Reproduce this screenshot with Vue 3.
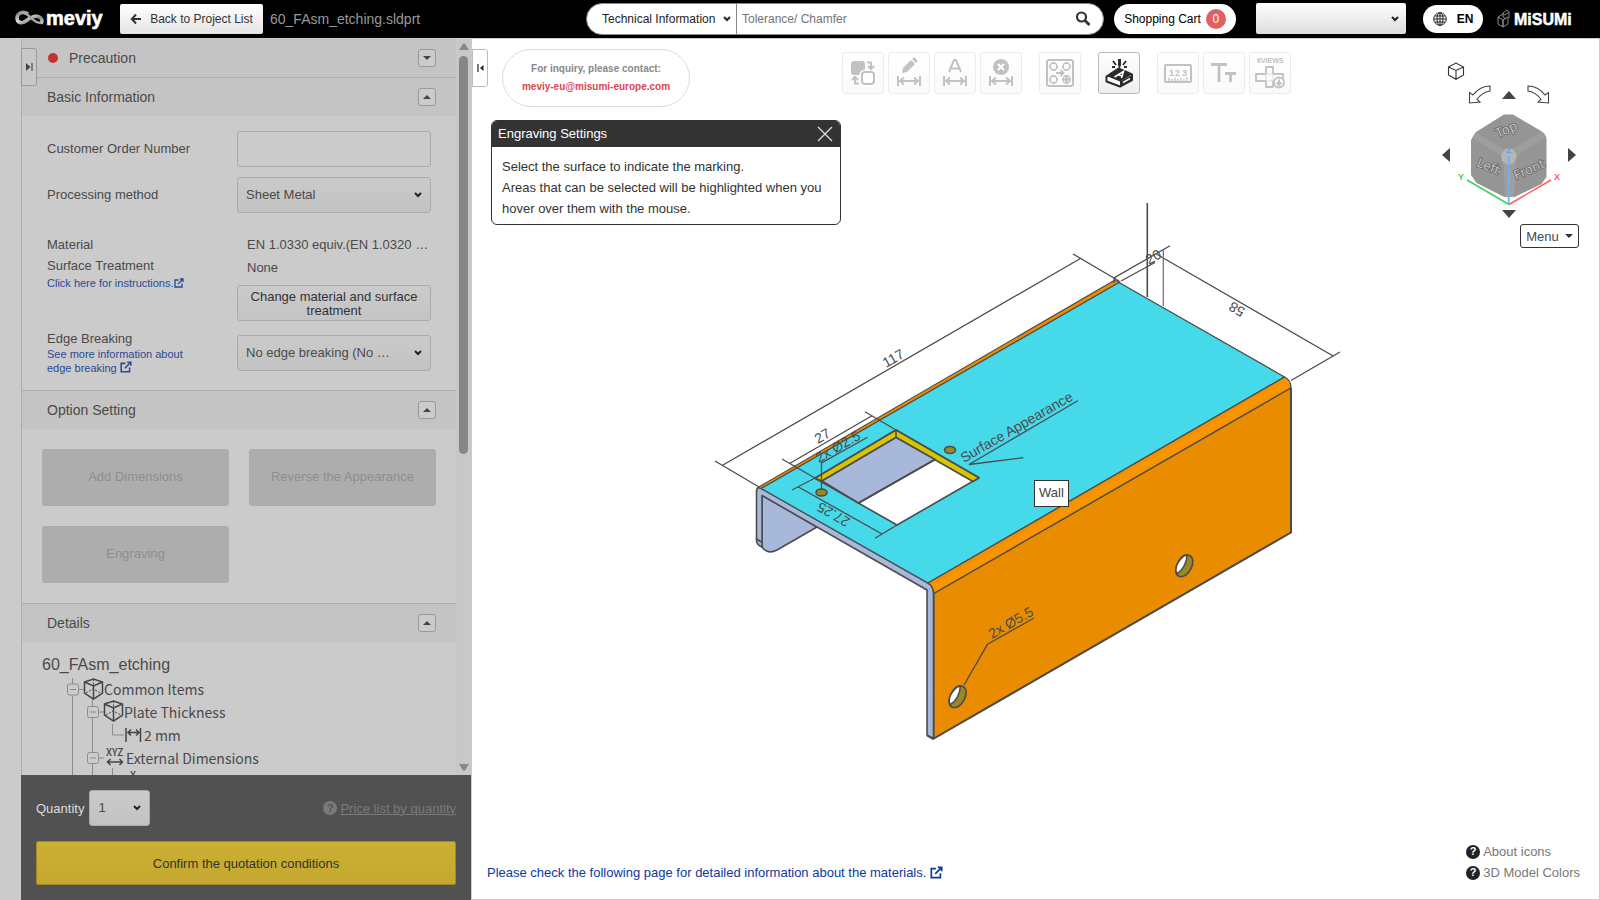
<script setup>
import { ref } from 'vue'

const orderNumber = ref('')
const keyword = ref('')
const options = ['Add Dimensions', 'Reverse the Appearance', 'Engraving']
</script>

<template>
  <div class="app">
    <header class="topbar">
      <a class="brand" href="#" aria-label="meviy">
        <svg width="90" height="28" viewBox="0 0 90 28">
          <defs>
            <linearGradient id="loop" x1="0" x2="1" y1="0" y2="1">
              <stop offset="0" stop-color="#777" />
              <stop offset="0.4" stop-color="#ddd" />
              <stop offset="0.7" stop-color="#888" />
              <stop offset="1" stop-color="#ccc" />
            </linearGradient>
          </defs>
          <path d="M13 9C8 5.500 2 8 2 13c0 5 5 6 9 3 4-3 8-5.500 12-4.500 4 1 5 4.500 3 7" fill="none" stroke="url(#loop)" stroke-width="3.600" />
          <path d="M5 8c5-2 9 3 13 6.500 2 2 5 3.500 8 3.500" fill="none" stroke="#a5a5a5" stroke-width="2.400" />
          <text x="31" y="20" class="brand-text">meviy</text>
        </svg>
      </a>
      <button class="back">
        <svg width="12" height="12" viewBox="0 0 12 12"><path d="M6 1.500 1.800 6 6 10.500M2 6h9" fill="none" stroke="#333" stroke-width="2" /></svg>
        Back to Project List
      </button>
      <span class="filename">60_FAsm_etching.sldprt</span>

      <form class="search" @submit.prevent>
        <span class="picker search-kind">
          <select aria-label="Search category"><option>Technical Information</option></select>
          <svg class="chev" width="8" height="6" viewBox="0 0 8 6"><path d="M1 1l3 3 3-3" /></svg>
        </span>
        <input v-model="keyword" type="text" aria-label="Search keyword" placeholder="Tolerance/ Chamfer" />
        <button class="go" aria-label="Search">
          <svg width="16" height="16" viewBox="0 0 16 16"><circle cx="6.500" cy="6" r="4.500" fill="none" stroke="#333" stroke-width="2.200" /><path d="M10 9.500l4.500 4.500" stroke="#333" stroke-width="2.800" /></svg>
        </button>
      </form>
      <button class="cart">Shopping Cart <span class="count">0</span></button>
      <span class="picker account">
        <select aria-label="Account"><option></option></select>
        <svg class="chev" width="8" height="6" viewBox="0 0 8 6"><path d="M1 1l3 3 3-3" /></svg>
      </span>
      <button class="lang">
        <svg width="14" height="14" viewBox="0 0 14 14" fill="none" stroke="#222"><circle cx="7" cy="7" r="6.300" /><ellipse cx="7" cy="7" rx="3" ry="6.300" /><path d="M7 1v12M1 7h12M2 4h10M2 10h10" /></svg>
        EN
      </button>
      <a class="misumi" href="#" aria-label="MiSUMi">
        <svg width="77" height="20" viewBox="0 0 77 20">
          <path d="M1 8l5 3v7l-5-3zM6 11l5-3v7l-5 3zM1 8l5-3 2 1M6 4l4-3 2 2v6M6 4v4l3 2M8 6l4-3" fill="none" stroke="#aaa" stroke-width="0.800" />
          <text x="17" y="16" class="misumi-text">MiSUMi</text>
        </svg>
      </a>
    </header>

    <div class="body">
      <aside class="side">
        <button class="tab tab-left" aria-label="Expand panel">
          <svg width="7" height="8" viewBox="0 0 7 8"><path d="M0 0l4.500 4L0 8z" fill="#444" /><path d="M6 0v8" stroke="#666" stroke-width="1.500" /></svg>
        </button>
        <div class="scroll">
          <div class="content">
            <section>
              <h2 class="bar"><i class="dot"></i>Precaution
                <button class="fold" aria-label="Open Precaution"><svg width="8" height="4" viewBox="0 0 8 4"><path d="M0 0h8L4 4z" /></svg></button>
              </h2>
            </section>
            <section>
              <h2 class="bar lined">Basic Information
                <button class="fold" aria-label="Close Basic Information"><svg width="8" height="4" viewBox="0 0 8 4"><path d="M0 4h8L4 0z" /></svg></button>
              </h2>
              <div class="form">
                <div class="field">
                  <label for="order">Customer Order Number</label>
                  <input id="order" v-model="orderNumber" type="text" class="box" />
                </div>
                <div class="field">
                  <label for="method">Processing method</label>
                  <span class="picker">
                    <select id="method" class="box"><option>Sheet Metal</option></select>
                    <svg class="chev" width="8" height="6" viewBox="0 0 8 6"><path d="M1 1l3 3 3-3" /></svg>
                  </span>
                </div>
                <div class="field material">
                  <div class="names">
                    <div>Material</div>
                    <div>Surface Treatment</div>
                    <a href="#">Click here for instructions.<svg width="10" height="10" viewBox="0 0 10 10" class="ext"><path d="M4.500 2H1v7h7V5.500M6 1h3v3M9 1L4 6" /></svg></a>
                  </div>
                  <div class="values">
                    <div class="val">EN 1.0330 equiv.(EN 1.0320 …</div>
                    <div class="val second">None</div>
                    <button class="box change">Change material and surface treatment</button>
                  </div>
                </div>
                <div class="field">
                  <div class="edge">
                    <label for="edge">Edge Breaking</label>
                    <a href="#">See more information about<br />edge breaking <svg width="12" height="12" viewBox="0 0 10 10" class="ext"><path d="M4.500 2H1v7h7V5.500M6 1h3v3M9 1L4 6" /></svg></a>
                  </div>
                  <span class="picker">
                    <select id="edge" class="box"><option>No edge breaking (No …</option></select>
                    <svg class="chev" width="8" height="6" viewBox="0 0 8 6"><path d="M1 1l3 3 3-3" /></svg>
                  </span>
                </div>
              </div>
            </section>
            <section>
              <h2 class="bar lined">Option Setting
                <button class="fold" aria-label="Close Option Setting"><svg width="8" height="4" viewBox="0 0 8 4"><path d="M0 4h8L4 0z" /></svg></button>
              </h2>
              <div class="options">
                <button v-for="o in options" :key="o" disabled>{{ o }}</button>
              </div>
            </section>
            <section>
              <h2 class="bar lined">Details
                <button class="fold" aria-label="Close Details"><svg width="8" height="4" viewBox="0 0 8 4"><path d="M0 4h8L4 0z" /></svg></button>
              </h2>
              <div class="details">
                <div class="part">60_FAsm_etching</div>
                <ul class="tree">
                  <li>
                    <svg width="62" height="23" viewBox="42 0 62 23" class="branch">
                      <path d="M72.500 0v6M72.500 18v5M79 11.500h5M92.500 20v3" class="ln" />
                      <rect x="67.500" y="6" width="11" height="11" rx="2" class="ln" /><path d="M70 11.500h6" class="ln" />
                      <path d="M84.500 4l9-3 9 3v11l-9 6-9-6zM84.500 4l9 4 9-4M93.500 8v13" class="ic" /><path d="M93.500 1v10M86 15l7-4 8 4" class="ic dash" />
                    </svg>Common Items
                  </li>
                  <li>
                    <svg width="82" height="23" viewBox="42 0 82 23" class="branch">
                      <path d="M72.500 0v23M92.500 0v5M92.500 17v6M99 11h5" class="ln" />
                      <rect x="87.500" y="5.500" width="11" height="11" rx="2" class="ln" /><path d="M90 11h6" class="ln" />
                      <path d="M104.500 3l9-3 9 3v11l-9 6-9-6zM104.500 3l9 4 9-4M113.500 7v13" class="ic" /><path d="M113.500 0v10M106 14l7-4 8 4" class="ic dash" />
                    </svg>Plate Thickness
                  </li>
                  <li>
                    <svg width="102" height="23" viewBox="42 0 102 23" class="branch">
                      <path d="M72.500 0v23M92.500 0v23M112.500 0v11H124" class="ln" />
                      <path d="M126 4v14M140.500 4v14M128 8.500h11M131 5.500l-3 3 3 3M136 5.500l3 3-3 3" class="ic" />
                    </svg>2 mm
                  </li>
                  <li>
                    <svg width="84" height="23" viewBox="42 0 84 23" class="branch">
                      <path d="M72.500 0v23M92.500 0v5M92.500 17v6M99 11h5M112.500 21v2" class="ln" />
                      <rect x="87.500" y="5.500" width="11" height="11" rx="2" class="ln" /><path d="M90 11h6" class="ln" />
                      <text x="106" y="9" class="xyz">XYZ</text>
                      <path d="M107.500 15h15M110.500 12l-3 3 3 3M119.500 12l3 3-3 3" class="ic" />
                    </svg>External Dimensions
                  </li>
                  <li>
                    <svg width="102" height="23" viewBox="42 0 102 23" class="branch">
                      <path d="M72.500 0v23M92.500 0v23M112.500 0v23" class="ln" />
                      <text x="130" y="9" class="xyz">X</text>
                    </svg>
                  </li>
                </ul>
              </div>
            </section>
          </div>
          <div class="track">
            <svg width="10" height="7" viewBox="0 0 10 7"><path d="M0 7l4-6.500h2L10 7z" fill="#888" /></svg>
            <div class="thumb"></div>
            <svg width="10" height="7" viewBox="0 0 10 7"><path d="M0 0h10L6 6.500H4z" fill="#888" /></svg>
          </div>
        </div>
        <footer class="order">
          <div class="qty">
            <label for="qty">Quantity</label>
            <span class="picker small">
              <select id="qty" class="box"><option>1</option></select>
              <svg class="chev" width="8" height="6" viewBox="0 0 8 6"><path d="M1 1l3 3 3-3" /></svg>
            </span>
            <a class="prices" href="#"><i class="q">?</i><span>Price list by quantity</span></a>
          </div>
          <button class="confirm">Confirm the quotation conditions</button>
        </footer>
      </aside>

      <main class="viewer">
        <svg class="scene" width="1128" height="861" viewBox="472 39 1128 861" role="img" aria-label="Sheet metal part model">
          <defs>
            <linearGradient id="bend" gradientUnits="userSpaceOnUse" x1="1100" y1="484" x2="1107" y2="496">
              <stop offset="0" stop-color="#f09000" /><stop offset="0.500" stop-color="#fa9600" /><stop offset="1" stop-color="#f09000" />
            </linearGradient>
          </defs>
          <g stroke="#4c4c4c" stroke-width="1.600" stroke-linejoin="round">
            <path d="M762 495L817 527 777 550Q768 555 762 547z" fill="#a7b8da" />
            <path d="M756.500 491Q757 487 760 487.500L928 583Q933.500 586 933.500 593V738.500L927 735V590L762 495.500V547Q757 545 756.500 541z" fill="#a7b8da" />
            <path d="M756.500 539l5 3" fill="none" />
            <path d="M758 487.500L1115 280 1120 282 762 489z" fill="#ea8c00" stroke-width="1.200" />
            <path d="M761 488.500L1119 282.500 1284.500 377 928 583z" fill="#45d9ea" stroke-width="1.300" />
            <path d="M928 583L1284.500 377Q1291 380 1291 388L934 593.500Q933 586 928 583z" fill="url(#bend)" stroke-width="1.300" />
            <path d="M934 593.500L1291 388V532.500L934 738.500z" fill="#ea8c00" stroke-width="1.300" />
            <path d="M1291 388V532.500L933 739 927 735.500" fill="none" stroke-width="2" />
            <path d="M815 478.300L896 430 979 477.700 897 525z" fill="#fff" />
            <path d="M815 478.300L896 430V437.500L822 481z M896 430L979 477.700 973 481.500 896 437.500z" fill="#d8c400" />
            <path d="M822 481L896 437.500 935 459.500 858.500 503z" fill="#a7b8da" />
            <path d="M935 459.500L858.500 503" stroke-width="2" />
            <ellipse cx="950" cy="450" rx="5.500" ry="3.500" fill="#988a22" />
            <ellipse cx="821.500" cy="492.500" rx="5.500" ry="3.500" fill="#988a22" />
            <g v-for="(p, i) in [[1184, 565.7], [957.3, 696.7]]" :key="i" :transform="`translate(${p[0]} ${p[1]})`">
              <path d="M5-10.500C10-9 9.500-2 7 3 4 9-1 12-5 10.500-9 9-9 3-6-3-3-9 1-12 5-10.500z" fill="#988a22" />
              <path d="M3-10.500C3-5 0 4-7.500 8-9 3-7-2-5-4.500-2-9 0-10.500 3-10.500z" fill="#fff" />
            </g>
          </g>
          <g fill="none" stroke="#4c4c4c" stroke-width="1.300">
            <path d="M723 465L1080 258.700M715 461L759 487M1073 254L1119 281" />
            <path d="M790 463.300L872 415.700M782 459L815 478M865 411.700L896 430" />
            <path d="M821.500 490V463L867.500 437.300" />
            <path d="M798 486.700L882.500 534.300M792 490L815 478M875 538.300L897 525" />
            <path d="M1156.700 254.300L1332.700 355.700M1340 352L1291 380.500M1170 245.700L1114 278V283M1121 281L1155 262.500" />
            <path d="M1147.300 203V297" stroke-width="1.600" /><path d="M1163.300 250V306" stroke="#777" />
            <path d="M1023.300 457.700L969 464.500 1077.700 400.700" />
            <path d="M1033.500 618.300L987.500 644.300 964 685" />
          </g>
          <g class="dims">
            <text transform="translate(886 368) rotate(-30)">117</text>
            <text transform="translate(818 444) rotate(-30)">27</text>
            <text transform="translate(819 463) rotate(-30)">2x Ø2.5</text>
            <text transform="translate(851 519) rotate(210)">27.25</text>
            <text transform="translate(1246 309) rotate(210)">58</text>
            <text transform="translate(1149 265) rotate(-30)">20</text>
            <text transform="translate(964 463) rotate(-30)">Surface Appearance</text>
            <text transform="translate(992 639) rotate(-30)">2x Ø5.5</text>
          </g>
          <g>
            <rect x="1034.500" y="480.500" width="34" height="26" fill="#fff" stroke="#333" />
            <text x="1039" y="497" class="tip">Wall</text>
          </g>
        </svg>

        <button class="tab tab-right" aria-label="Collapse panel">
          <svg width="7" height="8" viewBox="0 0 7 8"><path d="M6.500 1L3 4l3.500 3z" fill="#222" /><path d="M1 0v8" stroke="#222" stroke-width="1.200" /></svg>
        </button>

        <div class="tools">
          <div class="inquiry">
            <span>For inquiry, please contact:</span>
            <a href="#">meviy-eu@misumi-europe.com</a>
          </div>
          <div class="toolbar">
            <div class="group">
              <button disabled aria-label="Swap"><svg viewBox="0 0 42 42"><rect x="9" y="9" width="14" height="14" rx="3" fill="#c2c2c2" /><rect x="20" y="20" width="12" height="12" rx="3" fill="#fff" stroke="#fff" stroke-width="5" /><rect x="20" y="20" width="12" height="12" rx="3" class="s" /><path d="M25 10.500h4V16M26 14l3 3 3-3M17 31.500h-4V26M10 28l3-3 3 3" class="s" /></svg></button>
              <button disabled aria-label="Edit dimension"><svg viewBox="0 0 42 42"><path d="M14 21l1-5 8-8 4 4-8 8zM24 7l1-1q1-1 2 0l2 2q1 1 0 2l-1 1z" fill="#c2c2c2" /><path d="M10 24v10M32 24v10M12 29h18M16 25.500L12 29l4 3.500M26 25.500l4 3.500-4 3.500" class="s" /></svg></button>
              <button disabled aria-label="Annotate dimension"><svg viewBox="0 0 42 42"><path d="M15 20l5-12h2l5 12M17 16.500h8" class="s" /><path d="M10 24v10M32 24v10M12 29h18M16 25.500L12 29l4 3.500M26 25.500l4 3.500-4 3.500" class="s" /></svg></button>
              <button disabled aria-label="Delete dimension"><svg viewBox="0 0 42 42"><circle cx="21" cy="15" r="8" fill="#c2c2c2" /><path d="M18 12l6 6M24 12l-6 6" stroke="#fff" stroke-width="2.200" /><path d="M10 24v10M32 24v10M12 29h18M16 25.500L12 29l4 3.500M26 25.500l4 3.500-4 3.500" class="s" /></svg></button>
            </div>
            <div class="group">
              <button disabled aria-label="Group holes"><svg viewBox="0 0 42 42"><rect x="8" y="8" width="26" height="26" rx="2" class="s" /><g fill="none" stroke="#c2c2c2" stroke-width="1.600"><circle v-for="(c, i) in [[14.500, 14.500], [27.500, 14.500], [14.500, 27.500], [27.500, 27.500]]" :key="i" :cx="c[0]" :cy="c[1]" r="3.600" /><path d="M14.500 10v2M14.500 17v2M10 14.500h2M17 14.500h2M27.500 10v2M27.500 17v2M23 14.500h2M30 14.500h2M14.500 23v2M14.500 30v2M10 27.500h2M17 27.500h2M27.500 23v9M23 27.500h9" /></g><circle cx="27.500" cy="27.500" r="2" fill="#c2c2c2" /><path d="M17 21h7M21.500 18l3 3-3 3" class="s" /></svg></button>
            </div>
            <div class="group">
              <button class="on" aria-label="Engraving"><svg viewBox="0 0 42 42"><path d="M8.500 24.500l12-8 13.500 6v5.500L22 34.500 8.500 29.500z" fill="#fff" stroke="#2b2b2b" stroke-width="2" stroke-linejoin="round" /><path d="M8.500 24l12-7.500 13.500 6L22 29.500z" fill="#2b2b2b" /><path d="M22 29l12-6v5L22 34.500z" fill="#2b2b2b" /><path d="M25 30.500l7-4" stroke="#f3f3f3" stroke-width="1.500" /><path d="M16.500 25l9-5.500-2 6.500M20 22.800l4 1.200" fill="none" stroke="#fff" stroke-width="1.500" /><path d="M20 7h3v6l-1.500 4L20 13z" fill="#2b2b2b" /><path d="M15 9l3 4M28 9l-3 4M14 15h3M26 15h3" stroke="#2b2b2b" stroke-width="1.800" /></svg></button>
            </div>
            <div class="group">
              <button disabled aria-label="Measure"><svg viewBox="0 0 42 42"><rect x="8" y="13" width="26" height="17" rx="1" class="s" /><text x="12" y="24" class="num">1</text><text x="18" y="24" class="num">2</text><text x="25" y="24" class="num">3</text><path d="M12 29v-3M15 29v-2M18 29v-3M21 29v-2M24 29v-3M27 29v-2M30 29v-4" stroke="#c2c2c2" stroke-width="1.300" /></svg></button>
              <button disabled aria-label="Text size"><svg viewBox="0 0 42 42"><path d="M8 12.500h16M16 12v18M22 21.500h11M27.500 21v9" fill="none" stroke="#c2c2c2" stroke-width="2.800" /></svg></button>
              <button disabled aria-label="Six views"><svg viewBox="0 0 42 42"><text x="8" y="11" class="views">6VIEWS</text><path d="M17 15h7v7h10v7H24v6h-7v-6H7v-7h10z" fill="none" stroke="#c2c2c2" stroke-width="1.800" stroke-linejoin="round" /><path d="M17 22h7v7h-7z" fill="none" stroke="#ddd" /><circle cx="30" cy="30.500" r="5" fill="#fcfcfc" stroke="#c2c2c2" stroke-width="1.800" /><path d="M30 27.500v5M27.500 30.500l2.500 2.500 2.500-2.500" class="s" /></svg></button>
            </div>
          </div>
        </div>

        <div class="dialog" role="dialog" aria-labelledby="dlg">
          <div class="dialog-head">
            <span id="dlg">Engraving Settings</span>
            <button aria-label="Close"><svg width="16" height="16" viewBox="0 0 16 16"><path d="M1 1l14 14M15 1L1 15" stroke="#ddd" stroke-width="1.300" /></svg></button>
          </div>
          <p>Select the surface to indicate the marking.<br />Areas that can be selected will be highlighted when you hover over them with the mouse.</p>
        </div>

        <div class="nav">
          <button class="home" aria-label="Isometric view"><svg width="18" height="18" viewBox="0 0 18 18"><path d="M1.500 5L9 1l7.500 4v8L9 17.300 1.500 13zM1.500 5L9 8.500 16.500 5M9 8.500v8.800" fill="none" stroke="#333" stroke-width="1.100" /></svg></button>
          <div class="turn">
            <button aria-label="Rotate counterclockwise"><svg width="23" height="19" viewBox="0 0 23 19"><path d="M22 1C14 1 9 5 5 10L1.500 7.500V18L12 17 9 14.500C12 10 16 7 22 6z" fill="#fff" stroke="#444" stroke-width="1.100" /></svg></button>
            <button aria-label="Rotate up"><svg width="14" height="8" viewBox="0 0 14 8"><path d="M0 8L7 0l7 8z" fill="#444" /></svg></button>
            <button aria-label="Rotate clockwise"><svg width="23" height="19" viewBox="0 0 23 19"><path d="M1 1C9 1 14 5 18 10L21.500 7.500V18L11 17 14 14.500C11 10 7 7 1 6z" fill="#fff" stroke="#444" stroke-width="1.100" /></svg></button>
          </div>
          <div class="turn-mid">
            <button aria-label="Rotate left"><svg width="8" height="14" viewBox="0 0 8 14"><path d="M8 0v14L0 7z" fill="#444" /></svg></button>
            <svg width="118" height="102" viewBox="1450 104 118 102">
              <path d="M1504 114.500h9L1541 131q5 3 5.500 8v38l-5 7-27 13h-10l-28-14-5.500-8V140l5-8z" fill="#959595" />
              <path d="M1476 132l29 18 8-1 28-17 4 6-29 18-2 41h-9l-2-41-31-18z" fill="#9e9e9e" />
              <path d="M1505 149l8 0 4 6-3 8-6 2-6-4-1-6z" fill="#b5b5b5" />
              <g class="face">
                <text transform="translate(1498 138) rotate(-24)">Top</text>
                <text transform="translate(1476 166) rotate(22)">Left</text>
                <text transform="translate(1516 180) rotate(-24)">Front</text>
              </g>
              <path d="M1467 180l42 24.500" stroke="#41cf5e" stroke-width="1.500" />
              <path d="M1551 180l-42 24.500" stroke="#ff5d5d" stroke-width="1.500" />
              <path d="M1508.700 204V156" stroke="#6fb2f2" stroke-width="1.800" />
              <text x="1458" y="180" class="axis" fill="#41cf5e">Y</text>
              <text x="1554" y="180" class="axis" fill="#ff5d5d">X</text>
              <text x="1506" y="153" class="axis" fill="#5aa7f2">Z</text>
            </svg>
            <button aria-label="Rotate right"><svg width="8" height="14" viewBox="0 0 8 14"><path d="M0 0v14L8 7z" fill="#444" /></svg></button>
          </div>
          <button class="down" aria-label="Rotate down"><svg width="14" height="8" viewBox="0 0 14 8"><path d="M0 0h14L7 8z" fill="#444" /></svg></button>
          <button class="menu">Menu <svg width="8" height="4" viewBox="0 0 8 4"><path d="M0 0h8L4 4z" fill="#333" /></svg></button>
        </div>

        <div class="bottom">
          <a class="materials" href="#">Please check the following page for detailed information about the materials. <svg width="13" height="13" viewBox="0 0 10 10" class="ext"><path d="M4.500 2H1v7h7V5.500M6 1h3v3M9 1L4 6" /></svg></a>
          <div class="help">
            <a href="#"><i class="q">?</i>About icons</a>
            <a href="#"><i class="q">?</i>3D Model Colors</a>
          </div>
        </div>
      </main>
    </div>
  </div>
</template>

<style>
body { overflow: hidden; }
</style>

<style scoped>
* { box-sizing: border-box; }
.app { height: 100vh; display: flex; flex-direction: column; font-family: "Liberation Sans", Arial, sans-serif; font-size: 13px; color: #4a4a4a; background: #fff; }
button, select, input { font: inherit; color: inherit; margin: 0; }
button { padding: 0; }
svg { display: block; flex: none; }
a { text-decoration: none; }
i { font-style: normal; }

.topbar { flex: none; height: 39px; padding: 0 26px 1px 15px; display: flex; align-items: center; background: #000; border-bottom: 1px solid #ccc; font-size: 12px; }
.brand-text { font-size: 20px; font-weight: bold; fill: #fff; stroke: #fff; stroke-width: 0.6px; }
.misumi-text { font-size: 16px; font-weight: bold; fill: #fff; stroke: #fff; stroke-width: 0.5px; }
.brand { margin-right: 15px; }
.back { width: 143px; height: 30px; display: flex; align-items: center; justify-content: center; gap: 8px; border: 0; border-radius: 2px; color: #333; background: linear-gradient(#fff, #e4e4e4); }
.filename { margin-left: 7px; font-size: 14px; color: #999; }
.search { margin-left: auto; width: 518px; height: 32px; display: flex; align-items: center; background: #fff; border: 1px solid #888; border-radius: 16px; color: #222; overflow: hidden; }
.search input { flex: 1; height: 30px; border: 0; outline: 0; padding: 0 5px; background: none; }
.search input::placeholder { color: #757575; }
.search-kind { width: 150px; height: 30px; border-right: 1px solid #888; }
.search-kind select { padding-left: 15px; }
.search-kind .chev { right: 5px; }
.go { border: 0; background: none; margin-right: 12px; }
.cart { width: 122px; height: 30px; margin-left: 10px; border: 0; border-radius: 15px; background: #fff; color: #000; display: flex; align-items: center; justify-content: center; gap: 5px; }
.count { width: 20px; height: 20px; line-height: 20px; border-radius: 50%; background: #e06062; color: #fff; }
.account { width: 150px; height: 31px; margin-left: 20px; background: linear-gradient(#fff, #dcdcdc); border-radius: 2px; }
.account .chev { right: 7px; }
.lang { width: 60px; height: 28px; margin-left: 17px; display: flex; align-items: center; justify-content: center; gap: 10px; border: 0; border-radius: 14px; background: #fff; color: #000; font-weight: bold; }
.misumi { margin-left: 14px; }

.picker { position: relative; display: block; }
.picker select { appearance: none; width: 100%; height: 100%; border: 0; outline: 0; background: none; }
.chev { position: absolute; right: 9px; top: 50%; margin-top: -3px; fill: none; stroke: #222; stroke-width: 2; pointer-events: none; }

.body { flex: 1; min-height: 0; display: flex; }
.side { position: relative; flex: none; width: 472px; padding: 0 1px 0 21px; display: flex; flex-direction: column; background: #cbcbcb; }
.tab { position: absolute; z-index: 2; width: 16px; height: 38px; display: flex; align-items: center; justify-content: center; border: 1px solid #999; border-radius: 0 3px 3px 0; }
.tab-left { left: 21px; top: 9px; background: #c8c8c8; }
.tab-right { left: 0; top: 10px; border-color: #bbb; background: #fff; }
.scroll { flex: 1; min-height: 0; display: flex; overflow: hidden; border-left: 1px solid #adadad; }
.content { flex: 1; }
.track { width: 15px; padding: 4px 3px 4px 3px; display: flex; flex-direction: column; align-items: center; background: #c8c8c8; }
.thumb { width: 9px; height: 398px; margin: 6px 0 auto; border-radius: 5px; background: #868686; }
.bar { margin: 0; height: 38px; padding: 0 20px 0 25px; display: flex; align-items: center; font-size: 14px; font-weight: normal; background: #c4c4c4; }
.bar.lined { height: 39px; border-top: 1px solid #adadad; }
.dot { width: 10px; height: 10px; margin: 0 11px 0 1px; border-radius: 50%; background: #c63232; }
.fold { width: 18px; height: 18px; margin-left: auto; display: flex; align-items: center; justify-content: center; border: 1px solid #999; border-radius: 3px; background: #cbcbcb; fill: #444; }
.form { padding: 15px 25px; display: flex; flex-direction: column; gap: 10px; }
.field { display: grid; grid-template-columns: 190px 1fr; align-items: center; }
.field > label { padding-bottom: 2px; }
.material { margin-top: 11px; align-items: start; line-height: 21px; }
.names a, .edge a { display: block; font-size: 11px; line-height: 14px; color: #2a4a94; }
.ext { display: inline-block; vertical-align: -1px; fill: none; stroke: currentColor; stroke-width: 1.3; }
.val { padding-left: 10px; white-space: nowrap; }
.val.second { margin-top: 2px; }
.edge label { display: block; line-height: 16px; }
.box { display: block; width: 100%; height: 36px; border: 1px solid #aaa; border-radius: 3px; background: linear-gradient(#cbcbcb, #c4c4c4); outline: 0; }
.picker select.box { height: 36px; padding: 0 8px 1px; border: 1px solid #aaa; background: linear-gradient(#cbcbcb, #c2c2c2); }
input.box { background: #cbcbcb; padding: 0 8px; }
.change { margin-top: 7px; padding: 1px 12px 0; line-height: 14px; color: #333; }
.options { padding: 20px; display: grid; grid-template-columns: 1fr 1fr; gap: 20px; }
.options button { height: 57px; padding-bottom: 2px; border: 0; border-radius: 3px; background: #adadad; color: #8e8e8e; }
.details { padding: 10px 20px 0; }
.part { font-size: 16px; line-height: 26px; }
.tree { list-style: none; margin: 0; padding: 0; font-family: "Noto Sans CJK JP", "Noto Sans", sans-serif; font-size: 14px; }
.tree li { display: flex; height: 23px; line-height: 22px; white-space: nowrap; }
.ln { fill: none; stroke: #8c8c8c; stroke-width: 1; }
.ic { fill: none; stroke: #444; stroke-width: 1.5; }
.dash { stroke-width: 1; stroke-dasharray: 2 1.5; }
.branch { overflow: visible; }
.xyz { font-size: 10px; font-weight: 500; fill: #444; }
.order { flex: none; padding: 15px; background: #515151; }
.qty { display: flex; align-items: center; margin-bottom: 15px; color: #ddd; }
.small { width: 61px; margin-left: 5px; color: #4a4a4a; }
.prices { margin-left: auto; display: flex; align-items: center; gap: 3px; color: #7a7a7a; }
.prices span { text-decoration: underline; }
.prices .q { background: #7a7a7a; color: #515151; }
.q { display: inline-flex; align-items: center; justify-content: center; width: 14px; height: 14px; border-radius: 50%; background: #222; color: #fff; font-size: 11px; font-weight: bold; }
.confirm { display: block; width: 100%; height: 44px; border: 1px solid #a08a28; border-radius: 2px; background: linear-gradient(#ccb033, #c4a730); color: #333; }

.viewer { position: relative; flex: 1; min-width: 0; display: flex; flex-direction: column; border-right: 1px solid #ccc; border-bottom: 1px solid #ccc; overflow: hidden; }
.scene { position: absolute; left: 0; top: 0; }
.dims { font-size: 14px; fill: #4c4c4c; }
.tip { font-size: 13px; fill: #444; }
.tools { position: relative; padding: 10px 0 0 30px; display: flex; gap: 152px; }
.inquiry { width: 188px; height: 58px; display: flex; flex-direction: column; align-items: center; justify-content: center; border: 1px solid #ddd; border-radius: 29px; font-size: 10px; line-height: 18px; font-weight: bold; color: #888; }
.inquiry a { color: #d9454f; }
.toolbar { display: flex; gap: 17px; padding-top: 3px; }
.group { display: flex; gap: 4px; }
.toolbar button { width: 42px; height: 42px; border: 1px solid #ececec; border-radius: 3px; background: linear-gradient(#fff, #fafafa); }
.toolbar button svg { width: 42px; height: 42px; margin: -1px; }
.toolbar button.on { border-color: #bbb; background: linear-gradient(#fff, #eee); }
.s { fill: none; stroke: #c2c2c2; stroke-width: 2; }
.num { font-size: 9px; font-weight: bold; fill: #c2c2c2; }
.views { font-size: 7px; font-weight: bold; fill: #c2c2c2; }
.dialog { position: relative; width: 350px; margin: 13px 0 0 19px; border: 1px solid #333; border-radius: 6px; background: #fff; color: #333; overflow: hidden; }
.dialog-head { height: 26px; padding: 0 7px 0 6px; display: flex; align-items: center; justify-content: space-between; background: #333; color: #fff; }
.dialog-head span { padding-bottom: 2px; }
.dialog-head button { border: 0; background: none; }
.dialog p { margin: 0; padding: 9px 8px 5px 10px; line-height: 21px; }
.nav { position: absolute; top: 23px; right: 20px; width: 141px; display: flex; flex-direction: column; align-items: center; }
.nav button { border: 0; background: none; }
.home { align-self: flex-start; margin-left: 9px; }
.turn { width: 82px; margin-top: 5px; display: flex; justify-content: space-between; align-items: center; }
.turn-mid { display: flex; align-items: center; }
.down { margin-top: 4px; }
.nav .menu { align-self: flex-end; width: 59px; height: 24px; margin-top: 6px; display: flex; align-items: center; justify-content: center; gap: 6px; border: 1px solid #333; border-radius: 3px; background: #fff; }
.face { font-family: "Noto Sans", sans-serif; font-size: 13px; fill: #c4c4c4; stroke: #666; stroke-width: 1.5px; paint-order: stroke; }
.axis { font-size: 9px; font-weight: bold; }
.bottom { position: relative; margin-top: auto; padding: 0 19px 16px 15px; display: flex; align-items: flex-end; justify-content: space-between; line-height: 21px; }
.materials { color: #0a3a9c; }
.materials .ext { vertical-align: -2px; }
.help { display: flex; flex-direction: column; }
.help a { display: flex; align-items: center; gap: 3px; color: #777; }
</style>
